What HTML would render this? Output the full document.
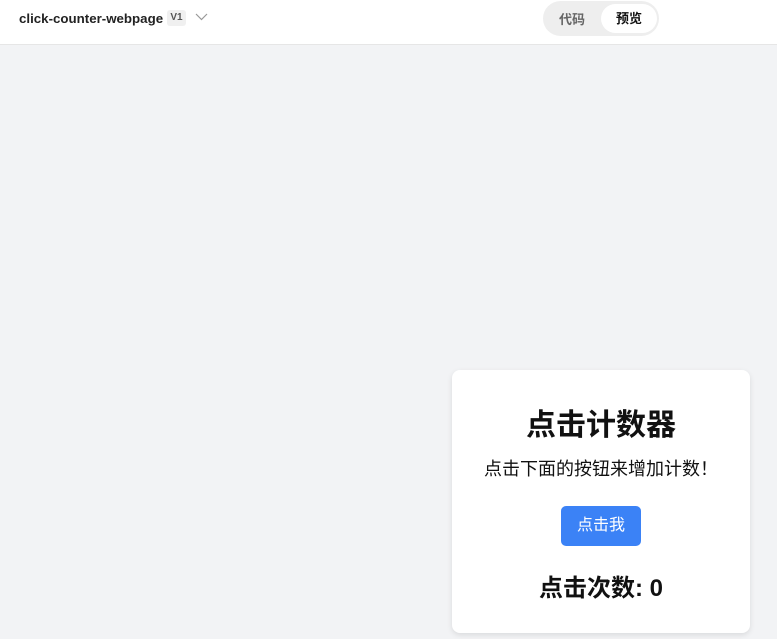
<!DOCTYPE html>
<html><head><meta charset="utf-8"><style>
*{margin:0;padding:0;box-sizing:border-box}
body{width:777px;height:639px;overflow:hidden;background:#f2f3f5;font-family:"Liberation Sans","Noto Sans CJK SC",sans-serif;position:relative}
.top{position:absolute;left:0;top:0;width:777px;height:45px;background:#fff;border-bottom:1px solid #e6e6e6}
.title{position:absolute;left:19px;top:11px;font-size:13.3px;font-weight:bold;color:#222}
.v{position:absolute;left:167px;top:10px;width:19px;height:16px;background:#f0f0f0;border-radius:3px;font-size:10px;font-weight:bold;color:#555;text-align:center;line-height:16px}
.chev{position:absolute;left:195px;top:12px}
.tog{position:absolute;left:543px;top:1px;width:116px;height:35px;background:#eeeeee;border-radius:18px}
.t1{position:absolute;left:16px;top:8px;font-size:13px;color:#666;font-weight:bold}
.t2{position:absolute;left:58px;top:3px;width:56px;height:29px;background:#fff;border-radius:15px;font-size:13px;font-weight:bold;color:#111;text-align:center;line-height:29px}
.card{position:absolute;left:452px;top:370px;width:298px;height:263px;background:#fff;border-radius:8px;box-shadow:0 2px 6px rgba(0,0,0,.1);text-align:center}
h1{position:absolute;top:30px;width:100%;font-size:30px;font-weight:bold;color:#111}
.p{position:absolute;top:85px;left:0;width:100%;font-size:18px;color:#111}
.btn{position:absolute;left:109px;top:136px;width:80px;height:40px;background:#3b82f6;border-radius:5px;color:#fff;font-size:16px;line-height:40px}
.c{position:absolute;top:198px;width:100%;font-size:24px;font-weight:bold;color:#111}
</style></head><body>
<div class="top">
<div class="title">click-counter-webpage</div>
<div class="v">V1</div>
<svg class="chev" width="13" height="10" viewBox="0 0 13 10"><path d="M1 2l5.5 5.5L12 2" fill="none" stroke="#999" stroke-width="1.2"/></svg>
<div class="tog"><div class="t1">代码</div><div class="t2">预览</div></div>
</div>
<div class="card">
<h1>点击计数器</h1>
<div class="p">点击下面的按钮来增加计数！</div>
<div class="btn">点击我</div>
<div class="c">点击次数: 0</div>
</div>
</body></html>
